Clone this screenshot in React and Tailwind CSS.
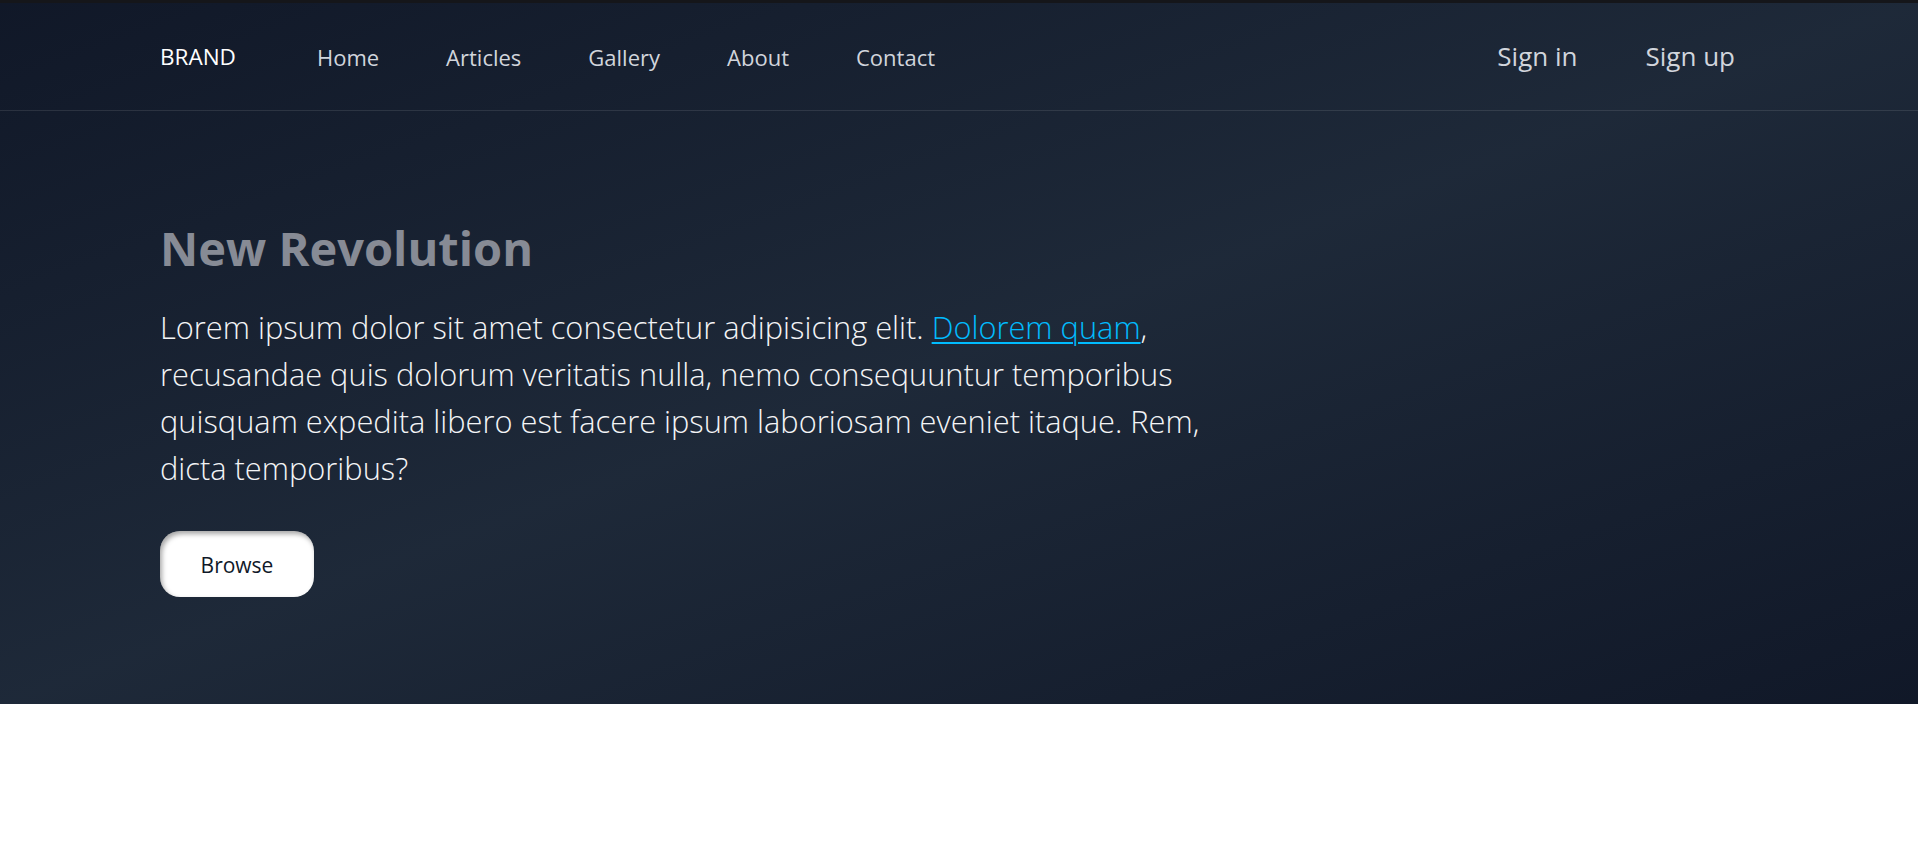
import React from 'react';

const links = ['Home', 'Articles', 'Gallery', 'About', 'Contact'];

export default function App() {
  return (
    <div className="min-h-screen bg-white" style={{ fontFamily: '"Open Sans", "Noto Sans", sans-serif' }}>
      <div className="bg-gradient-to-br from-gray-900 via-gray-800 to-gray-900 border-t-[3px] border-[#15161a]">
        {/* top bar */}
        <header className="h-[108px] px-[160px] flex items-center border-b border-white/10">
          <a href="#" className="text-[22.5px] text-white">BRAND</a>
          <nav className="ml-[81px] flex items-center gap-[67px] pt-[2px]">
            {links.map((l) => (
              <a key={l} href="#" className="text-[22px] text-gray-300 hover:text-white transition">
                {l}
              </a>
            ))}
          </nav>
          <div className="ml-auto mr-[23px] flex items-center gap-[68px]">
            <a href="#" className="text-[26px] text-gray-300 hover:text-white">Sign in</a>
            <a href="#" className="text-[26px] text-gray-300 hover:text-white">Sign up</a>
          </div>
        </header>

        <section className="px-[160px] pt-[107px] pb-[107px]">
          <h1 className="text-[47px] leading-[60px] font-bold text-[#878b95]">New Revolution</h1>
          <p className="mt-[26px] max-w-[1080px] text-[30.8px] leading-[47px] font-light text-gray-100">
            Lorem ipsum dolor sit amet consectetur adipisicing elit.{' '}
            <a href="#" className="text-sky-400 underline decoration-[1.5px] underline-offset-[3px]">Dolorem quam</a>,
            recusandae quis dolorum veritatis nulla, nemo consequuntur temporibus quisquam
            expedita libero est facere ipsum laboriosam eveniet itaque. Rem, dicta temporibus?
          </p>
          <button className="mt-[39px] w-[154px] h-[66px] pt-[3px] rounded-[20px] bg-white text-[21px] text-gray-900 shadow-[inset_2px_3px_5px_rgba(0,0,0,0.35)]">
            Browse
          </button>
        </section>
      </div>
    </div>
  );
}
